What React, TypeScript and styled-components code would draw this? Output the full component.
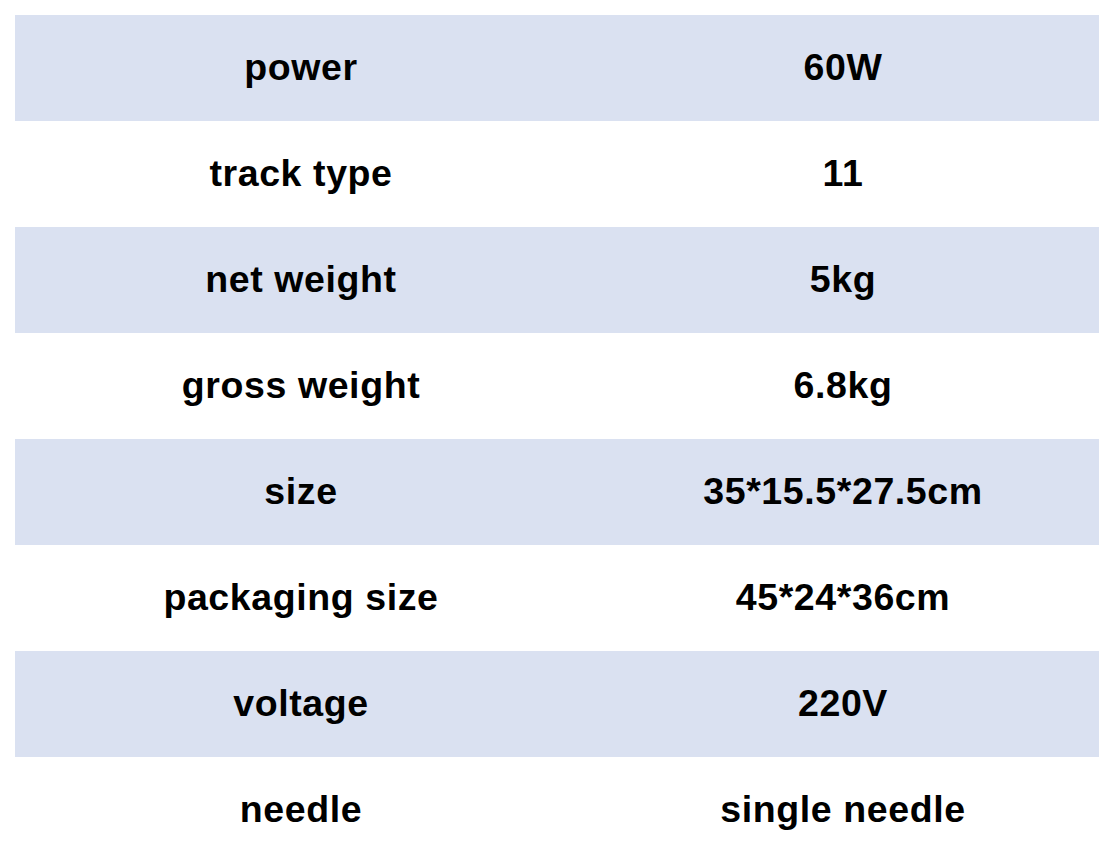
import React from "react"
import styled, { createGlobalStyle } from "styled-components"

const GlobalStyle = createGlobalStyle`
  html, body {
    margin: 0;
    padding: 0;
    background: #ffffff;
  }
`

const Page = styled.div`
  padding: 15px 15px 0 15px;
  width: 1084px;
`

const Table = styled.div`
  display: flex;
  flex-direction: column;
`

const Row = styled.div<{ $shaded: boolean }>`
  display: grid;
  grid-template-columns: 572px 512px;
  height: 106px;
  align-items: center;
  background: ${(p) => (p.$shaded ? "#dae1f1" : "#ffffff")};
`

const Cell = styled.div`
  text-align: center;
  font-family: "Liberation Sans", Arial, sans-serif;
  font-weight: bold;
  font-size: 37.5px;
  letter-spacing: 0.6px;
  color: #000000;
  line-height: 1;
`

const rows = [
  ["power", "60W"],
  ["track type", "11"],
  ["net weight", "5kg"],
  ["gross weight", "6.8kg"],
  ["size", "35*15.5*27.5cm"],
  ["packaging size", "45*24*36cm"],
  ["voltage", "220V"],
  ["needle", "single needle"],
]

export default function App() {
  return (
    <>
      <GlobalStyle />
      <Page>
        <Table>
          {rows.map(([name, value], i) => (
            <Row key={name} $shaded={i % 2 === 0}>
              <Cell>{name}</Cell>
              <Cell>{value}</Cell>
            </Row>
          ))}
        </Table>
      </Page>
    </>
  )
}
